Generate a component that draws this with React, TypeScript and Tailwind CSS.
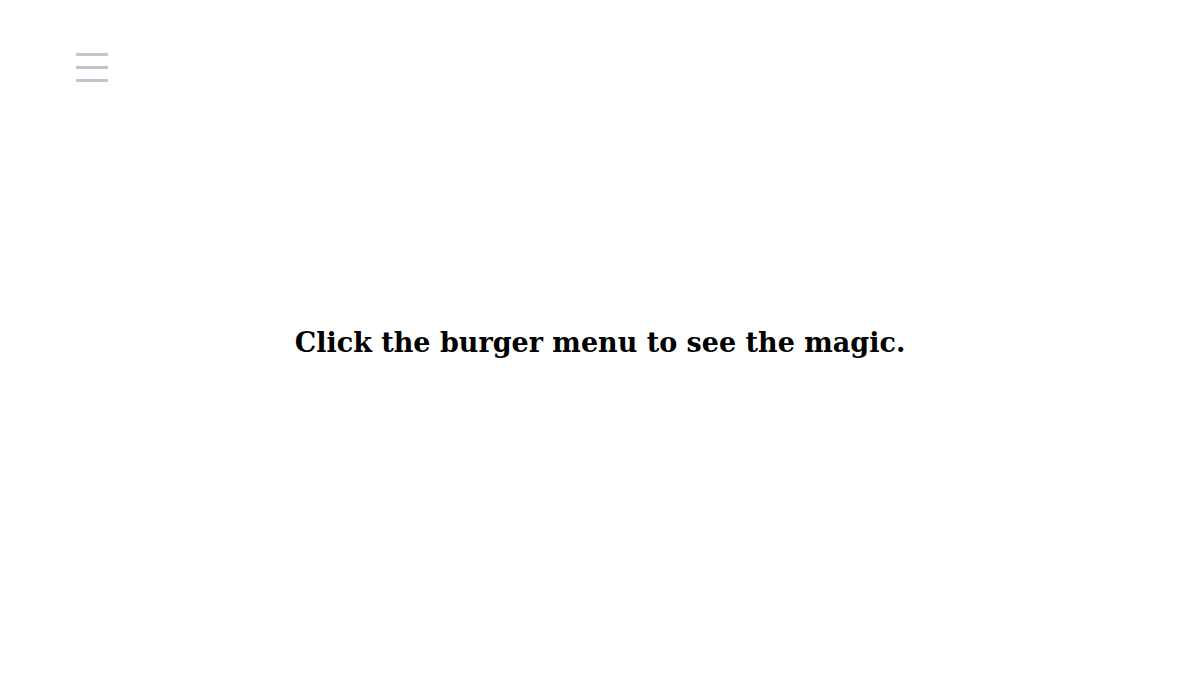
export default function App() {
  return (
    <div className="relative h-[682px] w-full bg-white">
      <button className="absolute left-[76px] top-[53px] flex w-8 flex-col gap-[10px]">
        <span className="block h-[3px] w-8 bg-[#c0c4cc]" />
        <span className="block h-[3px] w-8 bg-[#c0c4cc]" />
        <span className="block h-[3px] w-8 bg-[#c0c4cc]" />
      </button>
      <div className="flex h-full items-center justify-center pt-[4px]">
        <h1 className="text-[27px] font-bold text-black" style={{ fontFamily: '"DejaVu Serif", serif' }}>
          Click the burger menu to see the magic.
        </h1>
      </div>
    </div>
  );
}
